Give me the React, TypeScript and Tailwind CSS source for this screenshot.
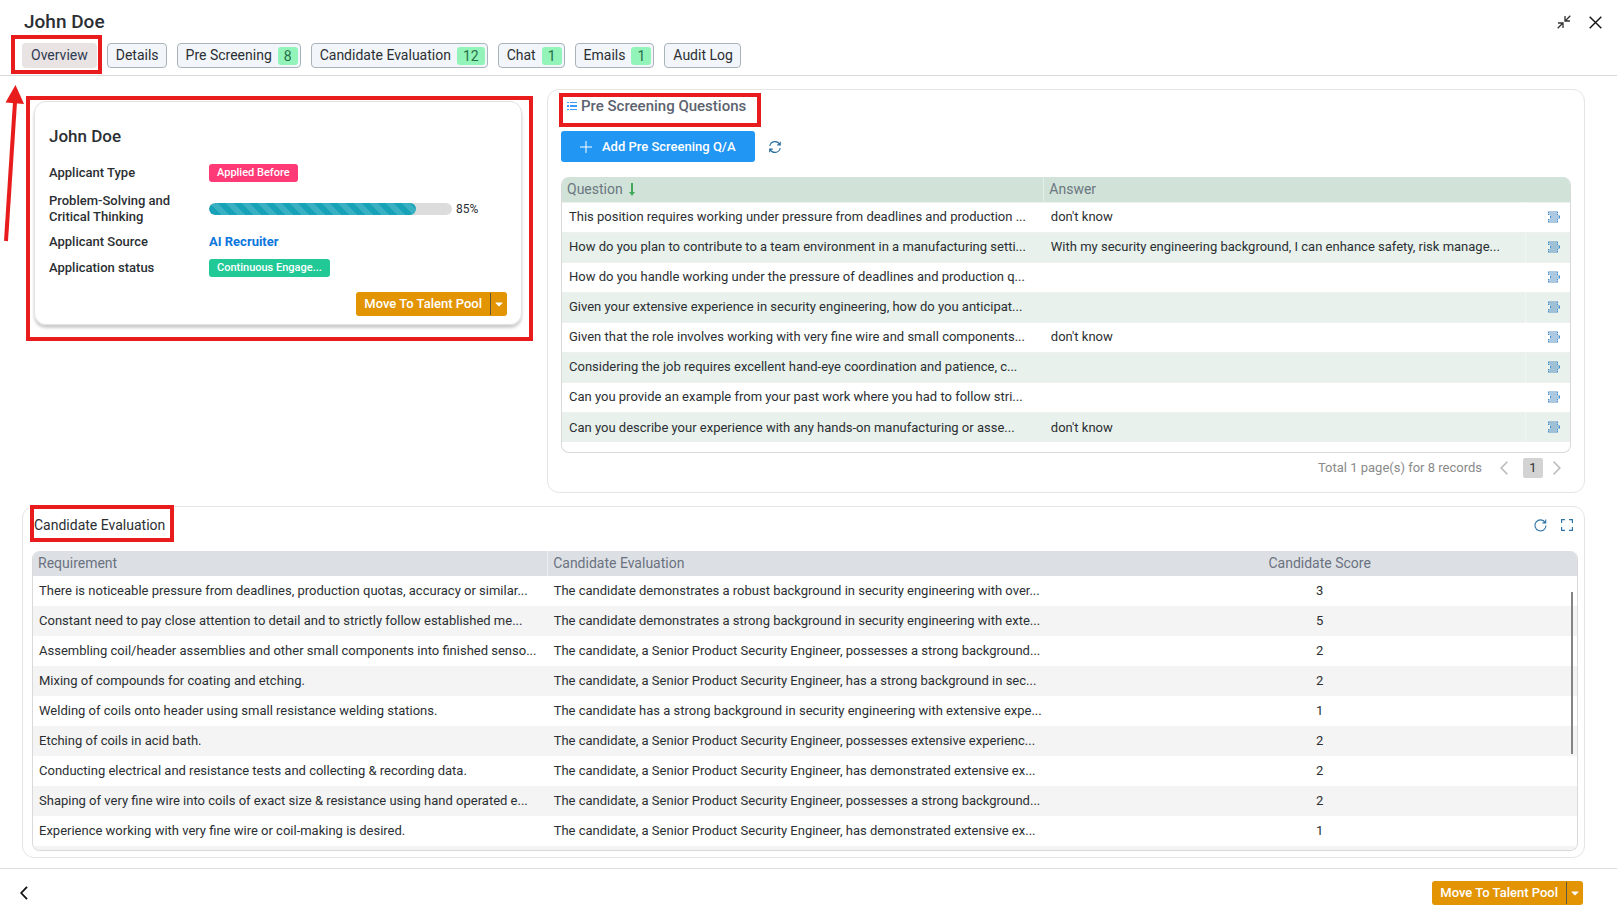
import type { ReactNode } from 'react';
import { FaCaretDown } from 'react-icons/fa';

const tabs = [
  { label: 'Overview', active: true },
  { label: 'Details' },
  { label: 'Pre Screening', count: 8 },
  { label: 'Candidate Evaluation', count: 12 },
  { label: 'Chat', count: 1 },
  { label: 'Emails', count: 1 },
  { label: 'Audit Log' },
];

const questions = [
  { q: 'This position requires working under pressure from deadlines and production ...', a: "don't know" },
  { q: 'How do you plan to contribute to a team environment in a manufacturing setti...', a: 'With my security engineering background, I can enhance safety, risk manage...' },
  { q: 'How do you handle working under the pressure of deadlines and production q...', a: '' },
  { q: 'Given your extensive experience in security engineering, how do you anticipat...', a: '' },
  { q: 'Given that the role involves working with very fine wire and small components...', a: "don't know" },
  { q: 'Considering the job requires excellent hand-eye coordination and patience, c...', a: '' },
  { q: 'Can you provide an example from your past work where you had to follow stri...', a: '' },
  { q: 'Can you describe your experience with any hands-on manufacturing or asse...', a: "don't know" },
];

const evaluations = [
  { req: 'There is noticeable pressure from deadlines, production quotas, accuracy or similar...', text: 'The candidate demonstrates a robust background in security engineering with over...', score: 3 },
  { req: 'Constant need to pay close attention to detail and to strictly follow established me...', text: 'The candidate demonstrates a strong background in security engineering with exte...', score: 5 },
  { req: 'Assembling coil/header assemblies and other small components into finished senso...', text: 'The candidate, a Senior Product Security Engineer, possesses a strong background...', score: 2 },
  { req: 'Mixing of compounds for coating and etching.', text: 'The candidate, a Senior Product Security Engineer, has a strong background in sec...', score: 2 },
  { req: 'Welding of coils onto header using small resistance welding stations.', text: 'The candidate has a strong background in security engineering with extensive expe...', score: 1 },
  { req: 'Etching of coils in acid bath.', text: 'The candidate, a Senior Product Security Engineer, possesses extensive experienc...', score: 2 },
  { req: 'Conducting electrical and resistance tests and collecting & recording data.', text: 'The candidate, a Senior Product Security Engineer, has demonstrated extensive ex...', score: 2 },
  { req: 'Shaping of very fine wire into coils of exact size & resistance using hand operated e...', text: 'The candidate, a Senior Product Security Engineer, possesses a strong background...', score: 2 },
  { req: 'Experience working with very fine wire or coil-making is desired.', text: 'The candidate, a Senior Product Security Engineer, has demonstrated extensive ex...', score: 1 },
];

const RowIcon = () => (
  <svg width="12" height="12" viewBox="0 0 12 12" shapeRendering="crispEdges">
    <path d="M0 0h10v4h2v4h-2v4H0V8h2V4H0z" fill="#4a86bd" fillOpacity="0.45" />
    <path d="M0 1h1v1H0zM0 3h1v1H0zM2 5h1v2H2zM0 8h1v1H0zM0 10h1v1H0zM9 1h1v1H9zM9 3h1v1H9zM11 5h1v2h-1zM9 8h1v1H9zM9 10h1v1H9z" fill="#3d8fd6" />
  </svg>
);

const TalentPoolButton = () => (
  <div className="flex h-6 items-stretch overflow-hidden rounded-[3px] bg-[#e29403] text-white">
    <button type="button" className="px-2 text-[13px] font-medium">
      Move To Talent Pool
    </button>
    <span className="my-px w-px bg-[#5f5640]" />
    <button type="button" aria-label="More actions" className="flex w-4 items-center justify-center">
      <FaCaretDown className="h-3 w-3" />
    </button>
  </div>
);

const Field = ({ label, children }: { label: string; children: ReactNode }) => (
  <>
    <dt className="pr-6 leading-4">{label}</dt>
    <dd className="flex items-center">{children}</dd>
  </>
);

const CandidateCard = () => (
  <section className="relative mt-3 mr-[19px] ml-3 self-start rounded-xl border border-[#e2e2e2] px-[14px] pt-[18px] pb-2 shadow-[0_3px_3px_rgba(0,0,0,0.2)]">
    <h2 className="text-[17px] leading-8 font-medium">John Doe</h2>
    <dl className="mt-2 grid grid-cols-[160px_1fr] grid-rows-[26px_38px_20px_24px] items-center gap-y-1 text-[13px] font-medium">
      <Field label="Applicant Type">
        <span className="rounded-[3px] bg-[#ff3a77] px-2 text-[11px] leading-[18px] text-white">Applied Before</span>
      </Field>
      <Field label="Problem-Solving and Critical Thinking">
        <div className="h-3 w-[243px] overflow-hidden rounded-full bg-[#dcdcdc]">
          <div
            className="h-full rounded-full bg-[#17a2b8] bg-[linear-gradient(45deg,rgba(255,255,255,0.15)_25%,transparent_25%,transparent_50%,rgba(255,255,255,0.15)_50%,rgba(255,255,255,0.15)_75%,transparent_75%,transparent)] bg-[length:16px_16px]"
            style={{ width: '85%' }}
          />
        </div>
        <span className="ml-1 text-[12px] font-normal">85%</span>
      </Field>
      <Field label="Applicant Source">
        <a href="#source" className="font-bold text-[#0b76dc]">AI Recruiter</a>
      </Field>
      <Field label="Application status">
        <span className="rounded-[3px] bg-[#21c997] px-2 text-[11px] leading-[18px] text-white">Continuous Engage...</span>
      </Field>
    </dl>
    <div className="mt-3 flex justify-end">
      <TalentPoolButton />
    </div>
    <div className="pointer-events-none absolute -top-[6px] -right-[12px] -bottom-[17px] -left-[9px] border-4 border-[#e81c1c]" />
  </section>
);

const PreScreening = () => (
  <section className="rounded-xl border border-[#e5e5e5] px-[13px]">
    <h2 className="relative flex h-8 w-fit items-center gap-1 pl-[6px] text-[15px] font-medium text-[#5c6370]">
      <svg width="10" height="10" viewBox="0 0 10 10" fill="#3b9cff" shapeRendering="crispEdges">
        <path d="M0 1h2v1H0zM3 1h7v1H3zM0 4h2v2H0zM3 4h7v2H3zM0 8h2v1H0zM3 8h7v1H3z" />
      </svg>
      Pre Screening Questions
      <span className="pointer-events-none absolute top-[3px] -right-[15px] -bottom-[5px] -left-[2px] border-4 border-[#e81c1c]" />
    </h2>
    <div className="mt-[9px] flex items-center gap-[14px]">
      <button type="button" className="flex h-[31px] items-center gap-[10px] rounded-[3px] bg-[#2196f3] px-[19px] text-[13px] font-medium text-white">
        <svg width="12" height="12" viewBox="0 0 12 12" fill="none" stroke="white">
          <path d="M6 0v12M0 6h12" />
        </svg>
        Add Pre Screening Q/A
      </button>
      <button type="button" aria-label="Refresh questions">
        <svg width="12" height="12" viewBox="0 0 12 12" fill="none" stroke="#2a6f9e" strokeWidth="1.1">
          <path d="M.8 5A5.300 5.300 0 0 1 10.800 3.600M11.300.8v3.100H8.200M11.200 7A5.300 5.300 0 0 1 1.200 8.400M.7 11.200V8.100h3.100" />
        </svg>
      </button>
    </div>
    <div className="mt-[15px] overflow-hidden rounded-lg border-x border-b border-[#d9d9d9] pb-[10px]">
      <table className="w-full table-fixed text-left text-[13px]">
        <thead>
          <tr className="h-[25px] bg-[#d1e3d9] text-[14px] text-[#6b7680]">
            <th className="w-[47.8%] border-r border-[#e4eee8] px-[5px] font-normal">
              <span className="flex items-center gap-[6px]">
                Question
                <svg width="6" height="13" viewBox="0 0 6 13" fill="#43a95a">
                  <path d="M2 0h2v9h2l-3 4-3-4h2z" />
                </svg>
              </span>
            </th>
            <th className="px-[5px] font-normal">Answer</th>
            <th className="w-[45px]" aria-label="Actions" />
          </tr>
        </thead>
        <tbody>
          {questions.map(({ q, a }) => (
            <tr key={q} className="h-[30px] border-t border-[#eef1f0] even:bg-[#e8f1ec]">
              <td className="overflow-hidden pl-[7px] whitespace-nowrap">{q}</td>
              <td className="overflow-hidden pl-[7px] whitespace-nowrap">{a}</td>
              <td className="border-l border-white/40">
                <button type="button" aria-label="Open answer" className="ml-[22px] block">
                  <RowIcon />
                </button>
              </td>
            </tr>
          ))}
        </tbody>
      </table>
    </div>
    <div className="mb-[10px] flex h-[29px] items-center justify-end pr-[10px] text-[13px] text-[#8a8a8a]">
      <span className="mr-[18px]">Total 1 page(s) for 8 records</span>
      <button type="button" aria-label="Previous page">
        <svg width="8" height="14" viewBox="0 0 8 14" fill="none" stroke="#b9b9b9" strokeWidth="1.600">
          <path d="M7.300.8 1.200 7l6.100 6.200" />
        </svg>
      </button>
      <button type="button" className="mr-[10px] ml-[15px] h-5 w-5 rounded-[2px] bg-[#d3d3d3] text-[#333]">1</button>
      <button type="button" aria-label="Next page">
        <svg width="8" height="14" viewBox="0 0 8 14" fill="none" stroke="#b9b9b9" strokeWidth="1.600">
          <path d="M.7.8 6.800 7 .7 13.200" />
        </svg>
      </button>
    </div>
  </section>
);

const CandidateEvaluation = () => (
  <section className="mt-[13px] rounded-xl border border-[#e5e5e5] pr-[6px] pb-[6px] pl-[9px]">
    <div className="mb-2 flex h-9 items-center justify-between pr-[5px] pl-[2px]">
      <h2 className="relative text-[14px]">
        Candidate Evaluation
        <span className="pointer-events-none absolute -top-[10px] -right-[9px] -bottom-[6px] -left-1 border-4 border-[#e81c1c]" />
      </h2>
      <div className="flex items-center gap-[14px]">
        <button type="button" aria-label="Refresh evaluation">
          <svg width="13" height="13" viewBox="0 0 13 13" fill="none" stroke="#2f75a8" strokeWidth="1.1">
            <path d="M11.200 3.500A5.500 5.500 0 1 0 12 6.500M11.700.6v3.300H8.400" />
          </svg>
        </button>
        <button type="button" aria-label="Full screen">
          <svg width="12" height="12" viewBox="0 0 12 12" fill="none" stroke="#2f75a8" strokeWidth="1.2">
            <path d="M.6 4V.6H4M8 .6h3.400V4M11.400 8v3.400H8M4 11.400H.6V8" />
          </svg>
        </button>
      </div>
    </div>
    <div className="relative overflow-hidden rounded-lg border-x border-b border-[#d9d9d9]">
      <table className="w-full table-fixed text-left text-[13px]">
        <thead>
          <tr className="h-[25px] bg-[#dce0e5] text-[14px] text-[#6b7280]">
            <th className="w-1/3 border-r border-[#eceef1] px-[5px] font-normal">Requirement</th>
            <th className="w-1/3 px-[5px] font-normal">Candidate Evaluation</th>
            <th className="w-1/3 text-center font-normal">Candidate Score</th>
          </tr>
        </thead>
        <tbody>
          {evaluations.map(({ req, text, score }) => (
            <tr key={req} className="h-[30px] even:bg-[#f4f4f4]">
              <td className="overflow-hidden pl-[6px] whitespace-nowrap">{req}</td>
              <td className="overflow-hidden pl-[6px] whitespace-nowrap">{text}</td>
              <td className="text-center">{score}</td>
            </tr>
          ))}
          <tr className="h-1 bg-[#f4f4f4]">
            <td colSpan={3} />
          </tr>
        </tbody>
      </table>
      <span className="absolute top-[41px] right-1 h-[162px] w-[2px] bg-[#858585]" />
    </div>
  </section>
);

const App = () => {
  return (
    <div className="relative flex min-h-screen flex-col bg-white font-[Roboto,sans-serif] text-[#2b2f33]">
      <header className="border-b border-[#d9d9d9] pt-2 pb-[7px]">
        <div className="flex h-7 items-center justify-between pr-[15px] pl-6">
          <h1 className="text-[19px] font-medium">John Doe</h1>
          <div className="flex items-center gap-[18px]">
            <button type="button" aria-label="Collapse">
              <svg width="14" height="14" viewBox="0 0 14 14" fill="none" stroke="#333" strokeWidth="1.300">
                <path d="M13.300.7 8.300 5.700M8 1v5h5M.7 13.300l5-5M1 8h5v5" />
              </svg>
            </button>
            <button type="button" aria-label="Close">
              <svg width="13" height="13" viewBox="0 0 13 13" fill="none" stroke="#111" strokeWidth="1.400">
                <path d="m.7.7 11.600 11.600M12.300.7.7 12.300" />
              </svg>
            </button>
          </div>
        </div>
        <nav className="mt-[7px] flex gap-[10px] pl-[22px]">
          {tabs.map(({ label, count, active }) => (
            <button
              key={label}
              type="button"
              className={
                active
                  ? 'relative h-[25px] rounded-[4px] bg-[#e9e3e3] px-[9px] text-[14px] text-[#2f3b52]'
                  : 'flex h-[25px] items-center gap-[6px] rounded-[4px] border border-[#a9b4ba] bg-[#f2f6fa] pr-[2px] pl-2 text-[14px]'
              }
            >
              <span className={count || active ? '' : 'pr-[5px]'}>{label}</span>
              {count && (
                <span className="rounded-[3px] bg-[#92f4b8] px-[6px] leading-[18px] text-[#277048]">{count}</span>
              )}
              {active && (
                <span className="pointer-events-none absolute -top-2 -right-[5px] -bottom-[6px] -left-[11px] border-4 border-[#e81c1c]" />
              )}
            </button>
          ))}
        </nav>
      </header>

      <main className="flex-1 pt-[13px] pr-8 pb-[10px] pl-[22px]">
        <div className="grid grid-cols-[1fr_2fr] gap-[6px]">
          <CandidateCard />
          <PreScreening />
        </div>
        <CandidateEvaluation />
      </main>

      <footer className="flex items-center justify-between border-t border-[#dedede] pt-3 pr-[34px] pl-5">
        <button type="button" aria-label="Back">
          <svg width="8" height="14" viewBox="0 0 8 14" fill="none" stroke="#111" strokeWidth="1.800">
            <path d="M7 .9 1.200 7 7 13.100" />
          </svg>
        </button>
        <TalentPoolButton />
      </footer>

      <svg className="pointer-events-none absolute top-[84px] left-0" width="26" height="158" viewBox="0 0 26 158">
        <path d="M6 157 15 18" stroke="#e81c1c" strokeWidth="4" />
        <path d="M15.500 1 24 20 5.500 18.500z" fill="#e81c1c" />
      </svg>
    </div>
  );
};

export default App;
